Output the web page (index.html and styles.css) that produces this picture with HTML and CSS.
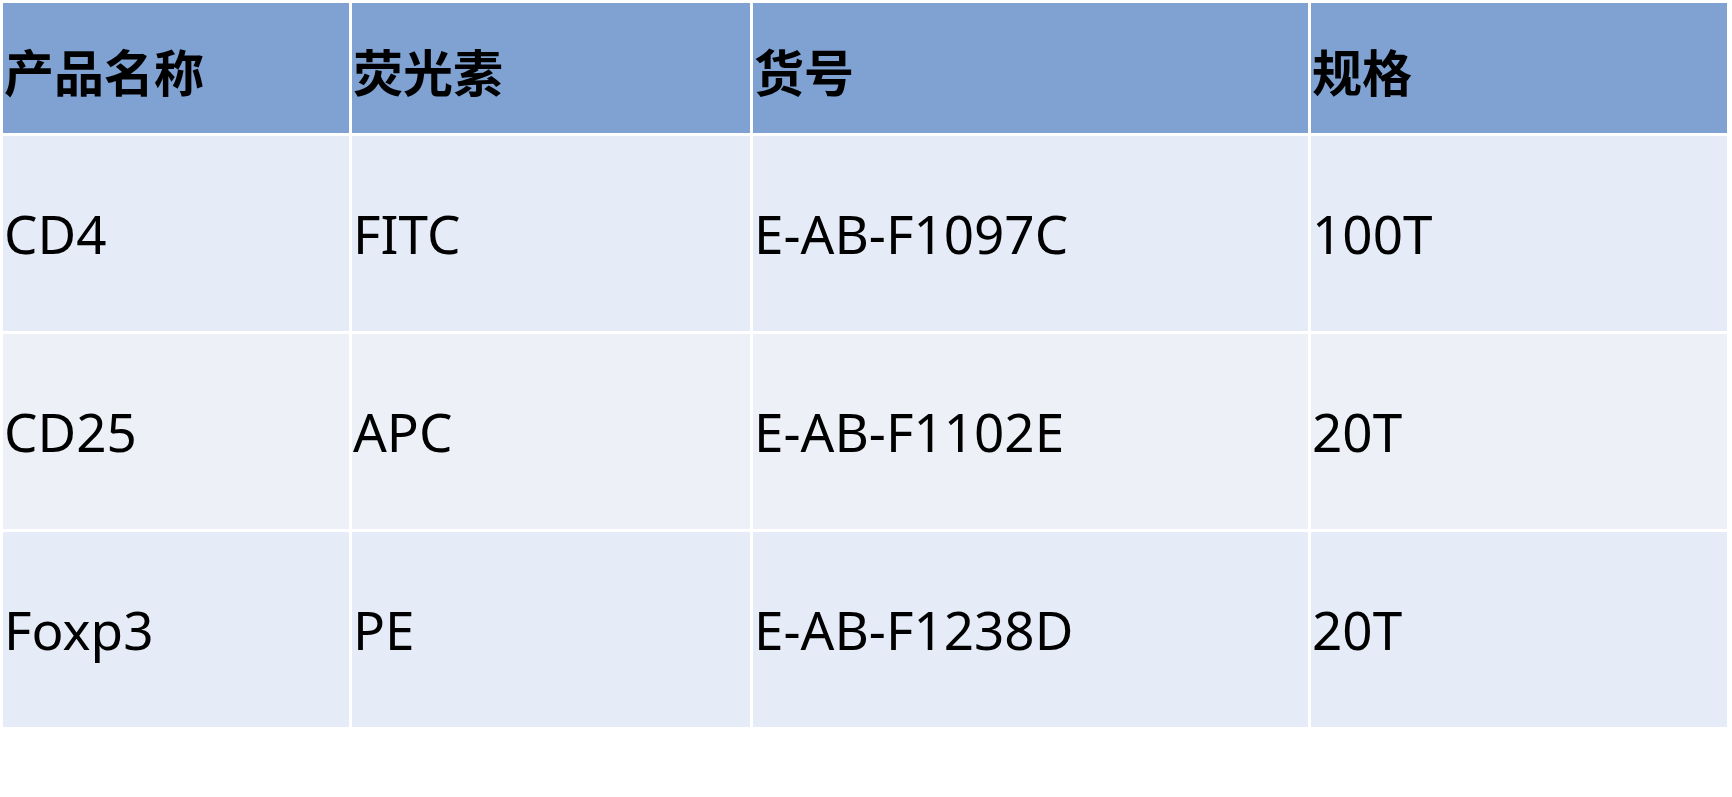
FILE: index.html
```html
<!DOCTYPE html>
<html lang="zh-CN">
<head>
<meta charset="utf-8">
<title>产品表</title>
<link rel="stylesheet" href="styles.css">
</head>
<body>
<div class="table">
  <div class="cell head">产品名称</div>
  <div class="cell head">荧光素</div>
  <div class="cell head">货号</div>
  <div class="cell head">规格</div>

  <div class="cell odd">CD4</div>
  <div class="cell odd">FITC</div>
  <div class="cell odd">E-AB-F1097C</div>
  <div class="cell odd">100T</div>

  <div class="cell even">CD25</div>
  <div class="cell even">APC</div>
  <div class="cell even">E-AB-F1102E</div>
  <div class="cell even">20T</div>

  <div class="cell odd">Foxp3</div>
  <div class="cell odd">PE</div>
  <div class="cell odd">E-AB-F1238D</div>
  <div class="cell odd">20T</div>
</div>
</body>
</html>
```

FILE: styles.css
```css
html, body {
  margin: 0;
  padding: 0;
  background: #ffffff;
}

.table {
  display: grid;
  grid-template-columns: 346px 398px 555px 416px;
  grid-template-rows: 130px 195px 195px 195px;
  gap: 3px;
  padding: 3px;
  width: max-content;
  font-family: "Noto Sans", "Noto Sans CJK SC", sans-serif;
  color: #000000;
}

.cell {
  display: flex;
  align-items: center;
  padding-left: 1px;
  font-size: 53px;
  line-height: 1;
  white-space: nowrap;
}

.head {
  background: #7fa2d3;
  font-family: "Noto Sans CJK SC", sans-serif;
  font-weight: 700;
  font-size: 50px;
  padding-top: 4px;
}

.odd {
  background: #e5ecf7;
}

.even {
  background: #edf1f7;
}
```
